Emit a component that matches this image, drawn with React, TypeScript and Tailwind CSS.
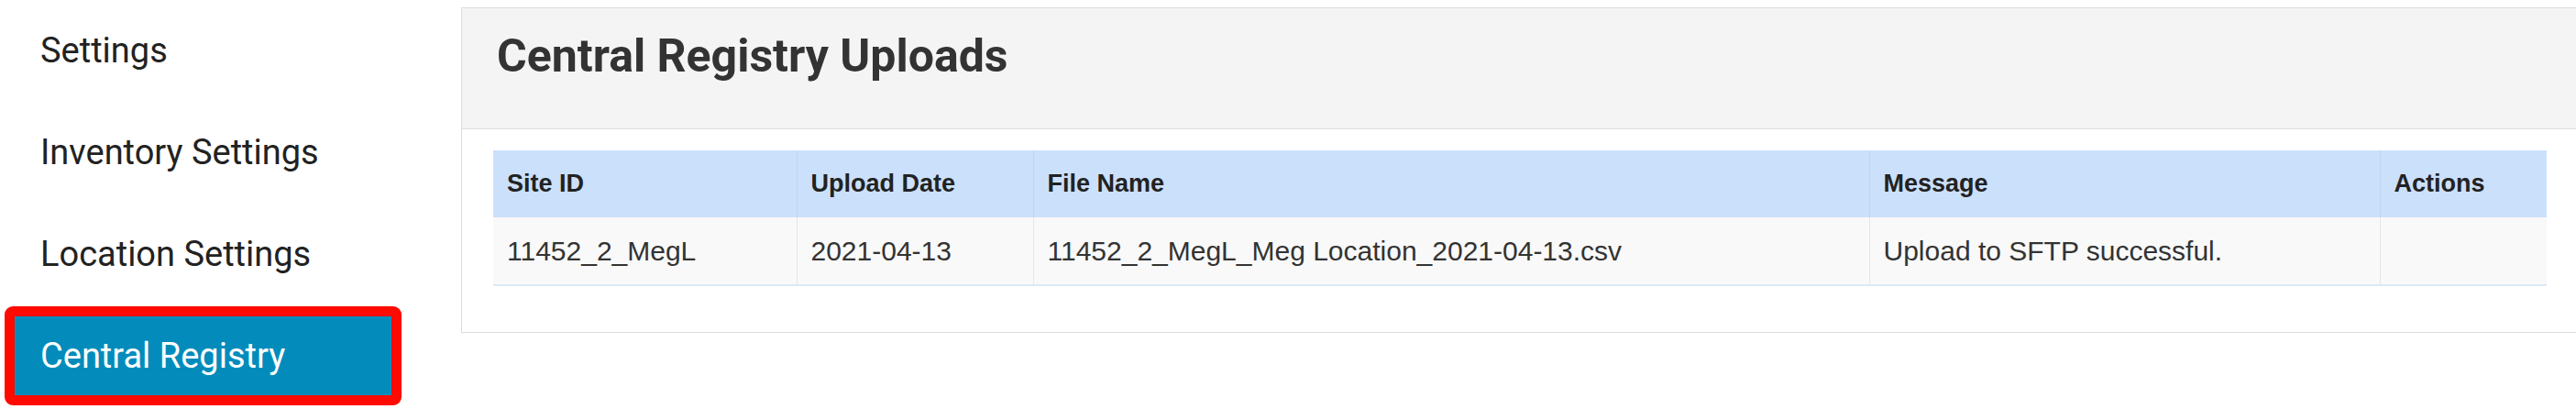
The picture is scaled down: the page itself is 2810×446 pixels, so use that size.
const navItems = ["Settings", "Inventory Settings", "Location Settings", "Central Registry"];

const columns = [
  { label: "Site ID", width: "w-[331px]" },
  { label: "Upload Date", width: "w-[258px]" },
  { label: "File Name", width: "w-[912px]" },
  { label: "Message", width: "w-[557px]" },
  { label: "Actions", width: "w-[182px]" },
];

const uploads = [
  {
    siteId: "11452_2_MegL",
    date: "2021-04-13",
    file: "11452_2_MegL_Meg Location_2021-04-13.csv",
    message: "Upload to SFTP successful.",
  },
];

export default function App() {
  return (
    <div className="flex w-[2810px] h-[446px] overflow-hidden bg-white font-['Roboto',sans-serif]">
      {/* sidebar */}
      <nav className="w-[427px] shrink-0 pl-[16px] pt-[12px] flex flex-col gap-[25px]">
        {navItems.map((item) => {
          const active = item === "Central Registry";
          return (
            <div
              key={item}
              className={
                active
                  ? "relative h-[86px] flex items-center pl-[28px] bg-[#038cbb] text-white text-[38px]"
                  : "h-[86px] flex items-center pl-[28px] text-[#222] text-[38px]"
              }
            >
              {item}
              {active && (
                <span className="absolute -inset-[11px] rounded-[9px] border-[11px] border-[#fe0a00]" />
              )}
            </div>
          );
        })}
      </nav>

      {/* main panel */}
      <div className="ml-[76px] mt-[8px] w-[2320px] h-[355px] shrink-0 border border-[#dcdcdc] bg-white">
        <div className="h-[132px] bg-[#f4f4f4] border-b border-[#dedede] pl-[38px] pt-[22px]">
          <h1 className="text-[50px] font-bold text-[#333] leading-[60px]">Central Registry Uploads</h1>
        </div>
        <div className="pl-[34px] pt-[23px]">
          <table className="border-collapse font-['Liberation_Sans',Arial,sans-serif] border-b-2 border-[#dde8f7]">
            <thead>
              <tr className="bg-[#cbe0fb] h-[73px]">
                {columns.map((col, i) => (
                  <th
                    key={col.label}
                    className={`${col.width} text-left align-middle pl-[15px] text-[27px] font-bold text-[#222] ${
                      i > 0 ? "border-l border-[#c1d5ef]" : ""
                    }`}
                  >
                    {col.label}
                  </th>
                ))}
              </tr>
            </thead>
            <tbody>
              {uploads.map((row) => (
                <tr key={row.file} className="bg-[#f9f9f9] h-[74px] text-[30px] text-[#333]">
                  <td className="pl-[15px] align-middle">{row.siteId}</td>
                  <td className="pl-[15px] align-middle border-l border-[#e6e6e6]">{row.date}</td>
                  <td className="pl-[15px] align-middle border-l border-[#e6e6e6]">{row.file}</td>
                  <td className="pl-[15px] align-middle border-l border-[#e6e6e6]">{row.message}</td>
                  <td className="pl-[15px] align-middle border-l border-[#e6e6e6]"></td>
                </tr>
              ))}
            </tbody>
          </table>
        </div>
      </div>
    </div>
  );
}
